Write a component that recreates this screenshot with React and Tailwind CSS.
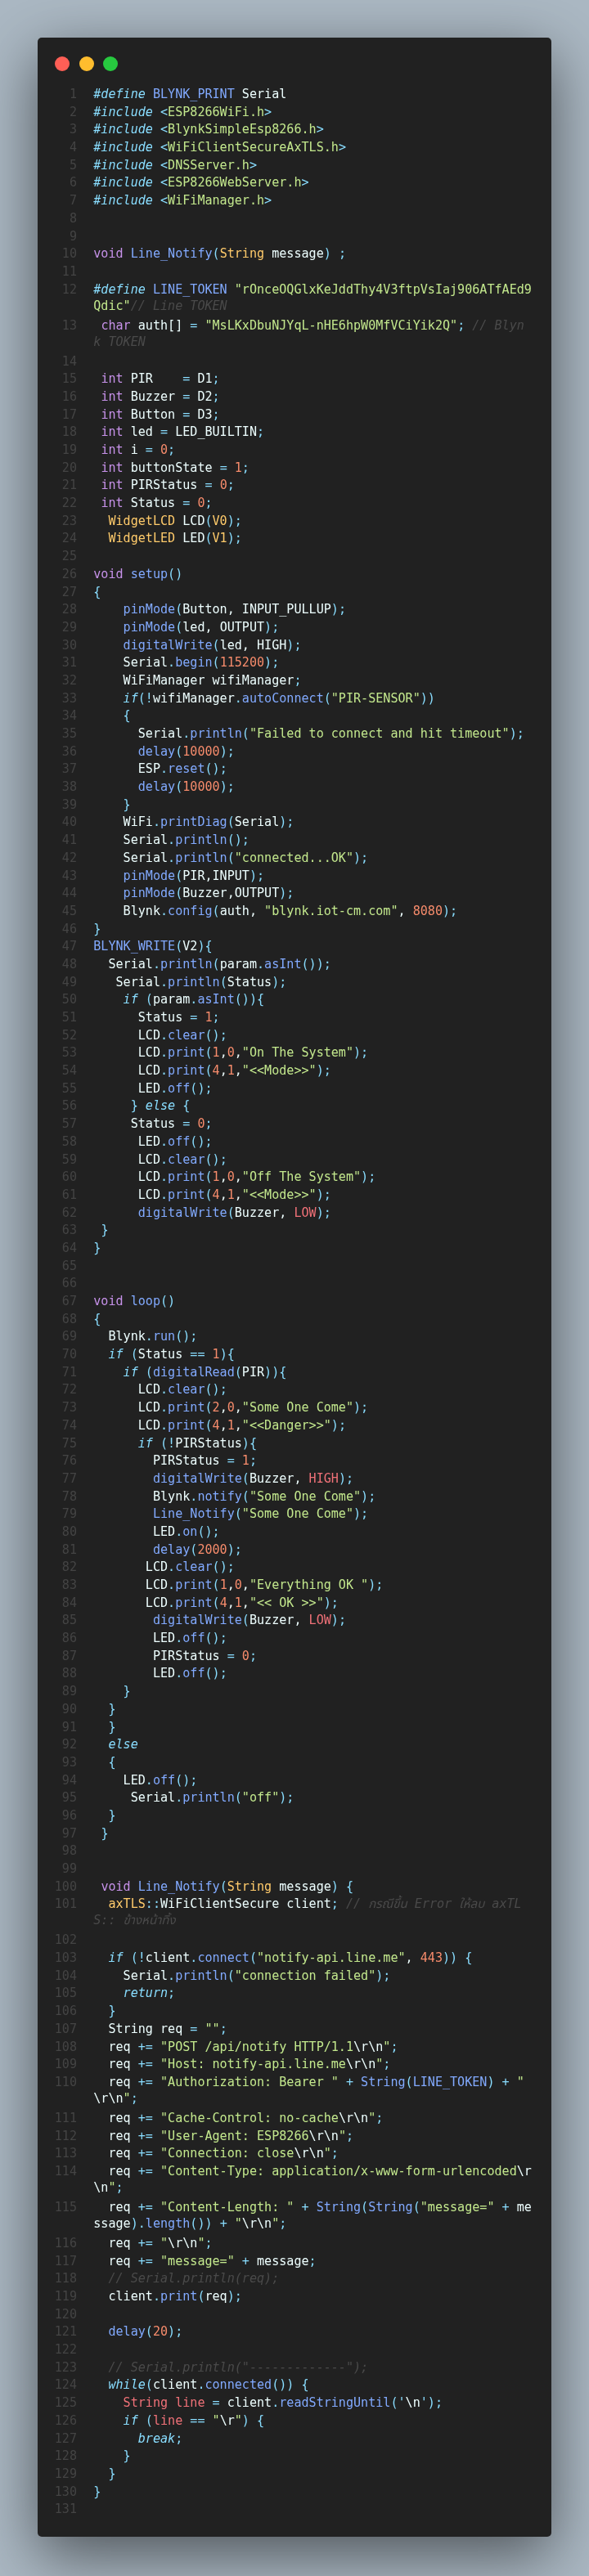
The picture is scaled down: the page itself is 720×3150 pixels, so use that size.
import React from "react";

const SOURCE = String.raw`#define BLYNK_PRINT Serial
#include <ESP8266WiFi.h>
#include <BlynkSimpleEsp8266.h>
#include <WiFiClientSecureAxTLS.h>
#include <DNSServer.h>
#include <ESP8266WebServer.h>
#include <WiFiManager.h>


void Line_Notify(String message) ;

#define LINE_TOKEN "rOnceOQGlxKeJddThy4V3ftpVsIaj906ATfAEd9¶Qdic"// Line TOKEN
 char auth[] = "MsLKxDbuNJYqL-nHE6hpW0MfVCiYik2Q"; // Blyn¶k TOKEN

 int PIR    = D1;
 int Buzzer = D2;
 int Button = D3;
 int led = LED_BUILTIN;
 int i = 0;
 int buttonState = 1;
 int PIRStatus = 0;
 int Status = 0;
  WidgetLCD LCD(V0);
  WidgetLED LED(V1);

void setup()
{
    pinMode(Button, INPUT_PULLUP);
    pinMode(led, OUTPUT);
    digitalWrite(led, HIGH);
    Serial.begin(115200);
    WiFiManager wifiManager;
    if(!wifiManager.autoConnect("PIR-SENSOR"))
    {
      Serial.println("Failed to connect and hit timeout");
      delay(10000);
      ESP.reset();
      delay(10000);
    }
    WiFi.printDiag(Serial);
    Serial.println();
    Serial.println("connected...OK");
    pinMode(PIR,INPUT);
    pinMode(Buzzer,OUTPUT);
    Blynk.config(auth, "blynk.iot-cm.com", 8080);
}
BLYNK_WRITE(V2){
  Serial.println(param.asInt());
   Serial.println(Status);
    if (param.asInt()){
      Status = 1;
      LCD.clear();
      LCD.print(1,0,"On The System");
      LCD.print(4,1,"<<Mode>>");
      LED.off();
     } else {
     Status = 0;
      LED.off();
      LCD.clear();
      LCD.print(1,0,"Off The System");
      LCD.print(4,1,"<<Mode>>");
      digitalWrite(Buzzer, LOW);
 }
}


void loop()
{
  Blynk.run();
  if (Status == 1){
    if (digitalRead(PIR)){
      LCD.clear();
      LCD.print(2,0,"Some One Come");
      LCD.print(4,1,"<<Danger>>");
      if (!PIRStatus){
        PIRStatus = 1;
        digitalWrite(Buzzer, HIGH);
        Blynk.notify("Some One Come");
        Line_Notify("Some One Come");
        LED.on();
        delay(2000);
       LCD.clear();
       LCD.print(1,0,"Everything OK ");
       LCD.print(4,1,"<< OK >>");
        digitalWrite(Buzzer, LOW);
        LED.off();
        PIRStatus = 0;
        LED.off();
    }
  }
  }
  else
  {
    LED.off();
     Serial.println("off");
  }
 }


 void Line_Notify(String message) {
  axTLS::WiFiClientSecure client; // กรณีขึ้น Error ให้ลบ axTL¶S:: ข้างหน้าทิ้ง

  if (!client.connect("notify-api.line.me", 443)) {
    Serial.println("connection failed");
    return;
  }
  String req = "";
  req += "POST /api/notify HTTP/1.1\r\n";
  req += "Host: notify-api.line.me\r\n";
  req += "Authorization: Bearer " + String(LINE_TOKEN) + "¶\r\n";
  req += "Cache-Control: no-cache\r\n";
  req += "User-Agent: ESP8266\r\n";
  req += "Connection: close\r\n";
  req += "Content-Type: application/x-www-form-urlencoded\r¶\n";
  req += "Content-Length: " + String(String("message=" + me¶ssage).length()) + "\r\n";
  req += "\r\n";
  req += "message=" + message;
  // Serial.println(req);
  client.print(req);

  delay(20);

  // Serial.println("-------------");
  while(client.connected()) {
    String line = client.readStringUntil('\n');
    if (line == "\r") {
      break;
    }
  }
}
`;

const STYLE = {
  plain: "text-[#eeffff]",
  punct: "text-[#89ddff]",
  control: "text-[#89ddff] italic",
  keyword: "text-[#c792ea]",
  fn: "text-[#82aaff]",
  string: "text-[#c3e88d]",
  number: "text-[#f78c6c]",
  type: "text-[#ffcb6b]",
  red: "text-[#f07178]",
  comment: "text-[#4a4a4a] italic",
};

const KEYWORDS = new Set(["void", "int", "char"]);
const CONTROL = new Set(["if", "else", "return", "while", "break"]);
const TYPES = new Set(["WidgetLCD", "WidgetLED", "V0", "V1", "axTLS"]);
const MACROS = new Set(["BLYNK_PRINT", "LINE_TOKEN"]);

function classify(word, line, start) {
  const end = start + word.length;
  const next = line[end];
  const prev = line[start - 1];
  if (KEYWORDS.has(word)) return "keyword";
  if (CONTROL.has(word)) return "control";
  if (TYPES.has(word)) return "type";
  if (MACROS.has(word)) return "fn";
  if (word === "String") {
    if (line.startsWith(" message", end)) return "type";
    if (line.startsWith(" line", end)) return "red";
    if (next === "(") return "fn";
    return "plain";
  }
  if (word === "line") return "red";
  if ((word === "LOW" || word === "HIGH") && line.slice(0, start).endsWith("Buzzer, ")) return "red";
  if ((word === "LCD" || word === "LED") && /Widget/.test(line)) return "plain";
  if (next === "(" || prev === ".") return "fn";
  return "plain";
}

function tokenize(line) {
  const out = [];
  const push = (type, text) => out.push({ type, text });
  let i = 0;
  while (i < line.length) {
    const rest = line.slice(i);
    let m;
    if ((m = rest.match(/^\/\/.*/))) {
      push("comment", m[0]);
    } else if ((m = rest.match(/^#\w+/))) {
      push("control", m[0]);
    } else if (line.startsWith("#include") && (m = rest.match(/^<([^>]+)>/))) {
      push("punct", "<");
      push("string", m[1]);
      push("punct", ">");
    } else if ((m = rest.match(/^"(?:[^"\\]|\\.)*"/))) {
      m[0].split(/(\\.)/).forEach((part) => {
        if (part) push(part.startsWith("\\") ? "plain" : "string", part);
      });
    } else if ((m = rest.match(/^'(\\.)'/))) {
      push("punct", "'");
      push("plain", m[1]);
      push("punct", "'");
    } else if ((m = rest.match(/^\d+\b/))) {
      push("number", m[0]);
    } else if ((m = rest.match(/^[A-Za-z_]\w*/))) {
      push(classify(m[0], line, i), m[0]);
    } else if ((m = rest.match(/^(\s+|,|\[\])/))) {
      push("plain", m[0]);
    } else {
      m = [rest[0]];
      push("punct", rest[0]);
    }
    i += m[0].length;
  }
  return out;
}

function splitTokens(tokens, at) {
  const a = [];
  const b = [];
  let col = 0;
  tokens.forEach((t) => {
    const end = col + t.text.length;
    if (end <= at) a.push(t);
    else if (col >= at) b.push(t);
    else {
      a.push({ type: t.type, text: t.text.slice(0, at - col) });
      b.push({ type: t.type, text: t.text.slice(at - col) });
    }
    col = end;
  });
  return [a, b];
}

function CodeLine({ tokens }) {
  return (
    <div className="h-5 whitespace-pre">
      {tokens.map((t, i) => (
        <span key={i} className={STYLE[t.type]}>
          {t.text}
        </span>
      ))}
    </div>
  );
}

function Row({ n, source }) {
  const at = source.indexOf("¶");
  const clean = source.replace("¶", "");
  const tokens = tokenize(clean);
  const parts = at >= 0 ? splitTokens(tokens, at) : [tokens];
  return (
    <div className={at >= 0 ? "flex h-[44px]" : "flex h-[21.7px]"}>
      <div className="w-[48px] shrink-0 text-right text-[#444444]">{n}</div>
      <div className="pl-[20.3px]">
        {parts.map((p, i) => (
          <CodeLine key={i} tokens={p} />
        ))}
      </div>
    </div>
  );
}

export default function App() {
  const rows = SOURCE.split("\n");
  return (
    <div className="min-h-[3150px] bg-[#abb8c3] p-[46px]">
      <div className="rounded-[5px] bg-[#212121] pb-[22.5px] shadow-[0_22px_74px_rgba(0,0,0,0.55)]">
        <div className="flex gap-[11.6px] pl-[21px] pt-[23px] pb-[18px]">
          <span className="h-[18px] w-[18px] rounded-full bg-[#ff5f56]" />
          <span className="h-[18px] w-[18px] rounded-full bg-[#ffbd2e]" />
          <span className="h-[18px] w-[18px] rounded-full bg-[#27c93f]" />
        </div>
        <div className="font-['DejaVu_Sans_Mono','Noto_Sans_Thai','Noto_Sans',monospace] text-[15.08px] leading-5 blur-[0.4px]">
          {rows.map((source, i) => (
            <Row key={i} n={i + 1} source={source} />
          ))}
        </div>
      </div>
    </div>
  );
}
